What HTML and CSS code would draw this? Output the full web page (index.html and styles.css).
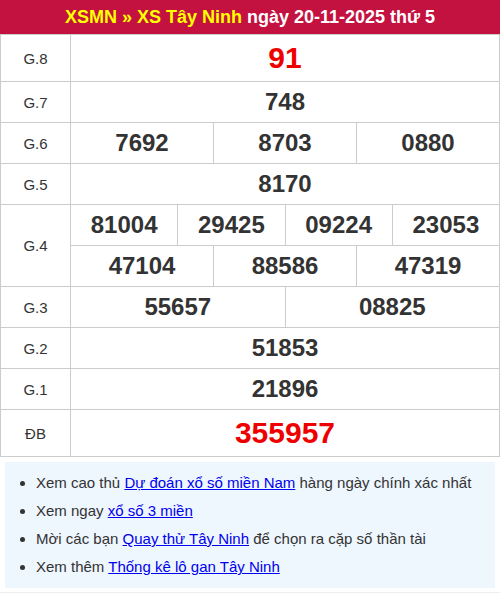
FILE: index.html
```html
<!DOCTYPE html>
<html lang="vi">
<head>
<meta charset="utf-8">
<link rel="stylesheet" href="styles.css">
</head>
<body>
<div class="wrap">
  <h2 class="title"><span class="hl">XSMN</span> <span class="hl">»</span> <span class="hl">XS Tây Ninh</span> ngày 20-11-2025 thứ 5</h2>
  <table class="kq">
    <colgroup>
      <col class="c-lbl">
      <col span="12">
    </colgroup>
    <tbody>
      <tr class="big"><td class="lbl">G.8</td><td colspan="12" class="num red">91</td></tr>
      <tr><td class="lbl">G.7</td><td colspan="12" class="num">748</td></tr>
      <tr><td class="lbl">G.6</td><td colspan="4" class="num">7692</td><td colspan="4" class="num">8703</td><td colspan="4" class="num">0880</td></tr>
      <tr><td class="lbl">G.5</td><td colspan="12" class="num">8170</td></tr>
      <tr><td class="lbl" rowspan="2">G.4</td><td colspan="3" class="num">81004</td><td colspan="3" class="num">29425</td><td colspan="3" class="num">09224</td><td colspan="3" class="num">23053</td></tr>
      <tr><td colspan="4" class="num">47104</td><td colspan="4" class="num">88586</td><td colspan="4" class="num">47319</td></tr>
      <tr><td class="lbl">G.3</td><td colspan="6" class="num">55657</td><td colspan="6" class="num">08825</td></tr>
      <tr><td class="lbl">G.2</td><td colspan="12" class="num">51853</td></tr>
      <tr><td class="lbl">G.1</td><td colspan="12" class="num">21896</td></tr>
      <tr class="big"><td class="lbl">ĐB</td><td colspan="12" class="num red">355957</td></tr>
    </tbody>
  </table>
  <ul class="links">
    <li>Xem cao thủ <a href="#">Dự đoán xổ số miền Nam</a> hàng ngày chính xác nhất</li>
    <li>Xem ngay <a href="#">xổ số 3 miền</a></li>
    <li>Mời các bạn <a href="#">Quay thử Tây Ninh</a> để chọn ra cặp số thần tài</li>
    <li>Xem thêm <a href="#">Thống kê lô gan Tây Ninh</a></li>
  </ul>
</div>
</body>
</html>
```
FILE: styles.css
```css
html, body {
  margin: 0;
  padding: 0;
  background: #fff;
}
body {
  font-family: "Liberation Sans", Arial, sans-serif;
  color: #333;
}
.wrap {
  width: 500px;
  border-bottom: 1px solid #eee;
  padding-bottom: 4px;
}
.title {
  margin: 0;
  height: 34px;
  line-height: 34px;
  background: #c41240;
  color: #fff;
  font-size: 18px;
  font-weight: bold;
  text-align: center;
}
.hl {
  color: #ff0;
}
.kq {
  width: 500px;
  border-collapse: collapse;
  table-layout: fixed;
}
.c-lbl {
  width: 70px;
}
.kq td {
  border: 1px solid #ccc;
  height: 40px;
  padding: 0;
  text-align: center;
  vertical-align: middle;
}
.kq tr.big td {
  height: 46px;
}
.lbl {
  font-size: 15px;
  color: #333;
}
.num {
  font-size: 24px;
  font-weight: bold;
  color: #333;
}
.num.red {
  color: #e00;
  font-size: 30px;
}
.links {
  margin: 5px 5px 0;
  padding: 7px 0 7px 31px;
  background: #eef6fe;
  list-style: disc;
  font-size: 15px;
  line-height: 28px;
  color: #333;
}
.links a {
  color: #00e;
  text-decoration: underline;
}
```
